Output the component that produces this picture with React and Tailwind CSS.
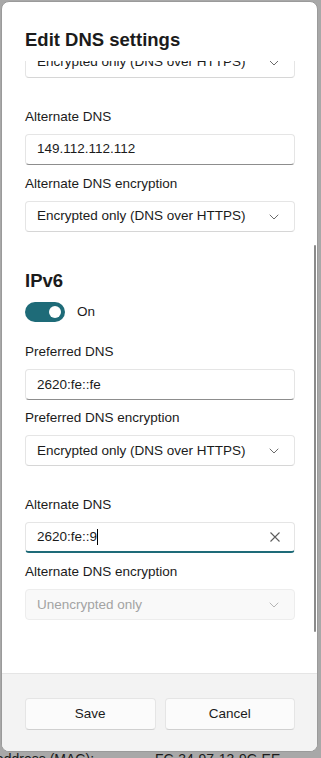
import React from "react";

const font = { fontFamily: '"Segoe UI", "Liberation Sans", Arial, sans-serif' };

const Chevron = () => (
  <svg width="10" height="6" viewBox="0 0 10 6" fill="none">
    <path d="M1 1l4 4 4-4" stroke="currentColor" strokeWidth="1" strokeLinecap="round" strokeLinejoin="round" />
  </svg>
);

const Label = ({ children }) => (
  <div className="h-5 text-[13.5px] leading-5 text-[#1b1b1b]">{children}</div>
);

const Input = ({ value, focused }) => (
  <div
    className={
      "mt-[7px] h-[31px] rounded-[4px] border bg-white flex items-center pl-[11px] pr-3 text-[13.5px] text-[#1b1b1b] " +
      (focused ? "border-[#e5e5e5] border-b-2 border-b-[#1e6b78]" : "border-[#e5e5e5] border-b-[#8d8d8d]")
    }
  >
    <span className="flex-1">
      {value}
      {focused && <span className="inline-block w-px h-4 bg-black align-middle -mt-[2px]" />}
    </span>
    {focused && (
      <svg width="10" height="10" viewBox="0 0 10 10" className="mr-[2px] text-[#5d5d5d]">
        <path d="M0.5 0.5l9 9M9.5 0.5l-9 9" stroke="currentColor" strokeWidth="1.1" />
      </svg>
    )}
  </div>
);

const Select = ({ value, disabled, first }) => (
  <div
    className={
      (first ? "" : "mt-[7px] ") +
      "h-[31px] rounded-[4px] border flex items-center pl-[11px] pr-[15px] text-[13.5px] " +
      (disabled
        ? "bg-[#f9f9f9] border-[#ededed] text-[#a3a3a3]"
        : "bg-white border-[#e5e5e5] border-b-[#d6d6d6] text-[#1b1b1b]")
    }
  >
    <span className="flex-1">{value}</span>
    <span className={disabled ? "text-[#b5b5b5]" : "text-[#6b6b6b]"}>
      <Chevron />
    </span>
  </div>
);

export default function App() {
  return (
    <div className="h-[758px] w-[321px] bg-[#a8a8a8] flex flex-col overflow-hidden" style={font}>
      <div className="shrink-0 ml-px mt-px w-[317px] h-[751px] rounded-lg bg-white border border-[#9a9a9a] flex flex-col overflow-hidden">
        <div className="shrink-0 h-[59px] pl-[23px] pt-[24px] text-[18.5px] leading-7 font-semibold text-[#1b1b1b]">
          Edit DNS settings
        </div>

        <div className="relative flex-1 overflow-hidden">
          <div className="-mt-[14px] pl-[23px] pr-[22px]">
            <Select value="Encrypted only (DNS over HTTPS)" first />

            <div className="mt-[29px]">
              <Label>Alternate DNS</Label>
              <Input value="149.112.112.112" />
            </div>
            <div className="mt-[9px]">
              <Label>Alternate DNS encryption</Label>
              <Select value="Encrypted only (DNS over HTTPS)" />
            </div>

            <div className="mt-[35px] h-7 text-[18.5px] leading-7 font-semibold text-[#1b1b1b]">IPv6</div>
            <div className="mt-[7px] flex items-center gap-3">
              <div className="w-10 h-5 rounded-full bg-[#1e6b78] flex items-center justify-end pr-[4px]">
                <div className="w-3 h-3 rounded-full bg-white" />
              </div>
              <span className="text-[13.5px] text-[#1b1b1b]">On</span>
            </div>

            <div className="mt-[20px]">
              <Label>Preferred DNS</Label>
              <Input value="2620:fe::fe" />
            </div>
            <div className="mt-[8px]">
              <Label>Preferred DNS encryption</Label>
              <Select value="Encrypted only (DNS over HTTPS)" />
            </div>

            <div className="mt-[29px]">
              <Label>Alternate DNS</Label>
              <Input value="2620:fe::9" focused />
            </div>
            <div className="mt-[9px]">
              <Label>Alternate DNS encryption</Label>
              <Select value="Unencrypted only" disabled />
            </div>
          </div>

          <div className="absolute right-[1px] top-[184px] w-[2px] h-[387px] rounded-full bg-[#8a8a8a]" />
        </div>

        <div className="h-[78px] shrink-0 bg-[#f3f3f3] border-t border-[#e5e5e5] pl-[23px] pr-[22px] pt-[24px] flex gap-[9px]">
          <button className="flex-1 h-[32px] rounded-[4px] bg-[#fbfbfb] border border-[#e5e5e5] border-b-[#d0d0d0] text-[13.5px] text-[#1b1b1b]">
            Save
          </button>
          <button className="flex-1 h-[32px] rounded-[4px] bg-[#fbfbfb] border border-[#e5e5e5] border-b-[#d0d0d0] text-[13.5px] text-[#1b1b1b]">
            Cancel
          </button>
        </div>
      </div>

      <div className="shrink-0 flex text-[14px] text-[#1b1b1b] leading-5 -mt-[3px]">
        <span className="w-[159px] -ml-[4px]">address (MAC):</span>
        <span>FC-34-97-13-9C-EE</span>
      </div>
    </div>
  );
}
